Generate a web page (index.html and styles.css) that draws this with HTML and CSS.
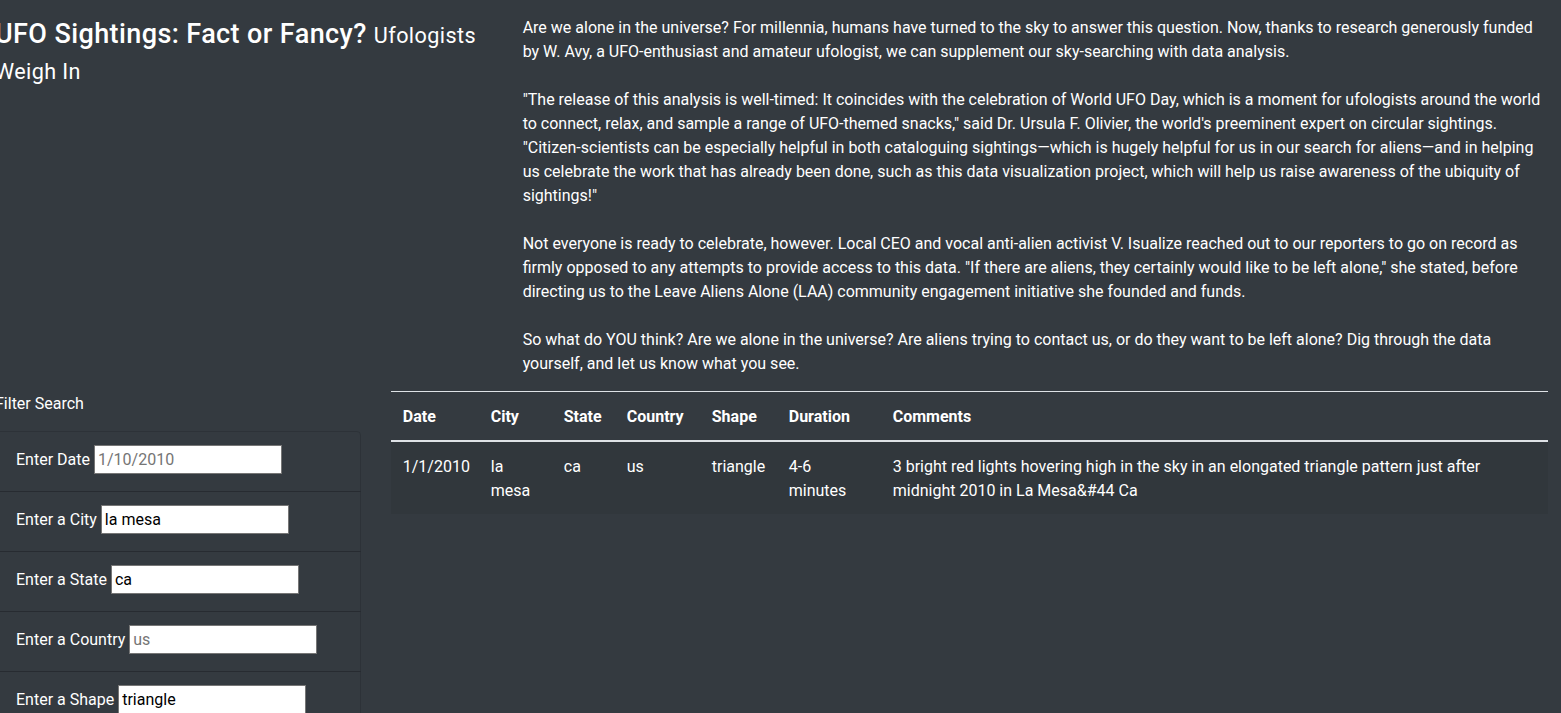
FILE: index.html
```html
<!DOCTYPE html>
<html lang="en">
<head>
<meta charset="utf-8">
<title>UFO Sightings</title>
<link rel="stylesheet" href="styles.css">
</head>
<body>
<div class="page">
  <div class="row">
    <div class="col col-4">
      <h1 class="title">UFO Sightings: Fact or Fancy? <small class="subtitle">Ufologists Weigh In</small></h1>
    </div>
    <div class="col col-8">
      <p class="intro">Are we alone in the universe? For millennia, humans have turned to the sky to answer this question. Now, thanks to research generously funded by W. Avy, a UFO-enthusiast and amateur ufologist, we can supplement our sky-searching with data analysis.<br><br>"The release of this analysis is well-timed: It coincides with the celebration of World UFO Day, which is a moment for ufologists around the world to connect, relax, and sample a range of UFO-themed snacks," said Dr. Ursula F. Olivier, the world's preeminent expert on circular sightings. "Citizen-scientists can be especially helpful in both cataloguing sightings—which is hugely helpful for us in our search for aliens—and in helping us celebrate the work that has already been done, such as this data visualization project, which will help us raise awareness of the ubiquity of sightings!"<br><br>Not everyone is ready to celebrate, however. Local CEO and vocal anti-alien activist V. Isualize reached out to our reporters to go on record as firmly opposed to any attempts to provide access to this data. "If there are aliens, they certainly would like to be left alone," she stated, before directing us to the Leave Aliens Alone (LAA) community engagement initiative she founded and funds.<br><br>So what do YOU think? Are we alone in the universe? Are aliens trying to contact us, or do they want to be left alone? Dig through the data yourself, and let us know what you see.</p>
    </div>
  </div>
  <div class="row">
    <div class="col col-3">
      <p class="filter-title">Filter Search</p>
      <ul class="filters">
        <li class="filter-item"><label class="filter-label" for="date">Enter Date</label><input class="filter-input" id="date" type="text" placeholder="1/10/2010"></li>
        <li class="filter-item"><label class="filter-label" for="city">Enter a City</label><input class="filter-input" id="city" type="text" value="la mesa"></li>
        <li class="filter-item"><label class="filter-label" for="state">Enter a State</label><input class="filter-input" id="state" type="text" value="ca"></li>
        <li class="filter-item"><label class="filter-label" for="country">Enter a Country</label><input class="filter-input" id="country" type="text" placeholder="us"></li>
        <li class="filter-item"><label class="filter-label" for="shape">Enter a Shape</label><input class="filter-input" id="shape" type="text" value="triangle"></li>
      </ul>
    </div>
    <div class="col col-9">
      <table class="ufo-table">
        <thead>
          <tr>
            <th class="c-date">Date</th>
            <th class="c-city">City</th>
            <th class="c-state">State</th>
            <th class="c-country">Country</th>
            <th class="c-shape">Shape</th>
            <th class="c-duration">Duration</th>
            <th class="c-comments">Comments</th>
          </tr>
        </thead>
        <tbody>
          <tr>
            <td>1/1/2010</td>
            <td>la mesa</td>
            <td>ca</td>
            <td>us</td>
            <td>triangle</td>
            <td>4-6 minutes</td>
            <td>3 bright red lights hovering high in the sky in an elongated triangle pattern just after midnight 2010 in La Mesa&amp;#44 Ca</td>
          </tr>
        </tbody>
      </table>
    </div>
  </div>
</div>
</body>
</html>
```
FILE: styles.css
```css
html, body {
  overflow-x: hidden;
}
body {
  margin: 0;
  background: #343a40;
  color: #fff;
  font-family: Roboto, "Open Sans", sans-serif;
  font-size: 16px;
  line-height: 24px;
}
.page {
  margin-left: -20px;
  width: 1583px;
  padding-top: 16px;
}
.row {
  display: flex;
}
.col {
  box-sizing: border-box;
  padding: 0 15px;
}
.col-4 { flex: 0 0 33.3333%; }
.col-8 { flex: 0 0 66.6667%; }
.col-3 { flex: 0 0 25%; }
.col-9 { flex: 0 0 75%; }

.title {
  margin: 0;
  font-size: 27px;
  line-height: 36px;
  font-weight: 500;
  letter-spacing: 0.4px;
}
.subtitle {
  font-size: 80%;
  font-weight: 400;
  line-height: 1;
}
.intro {
  margin: 0 0 15px;
}
.filter-title {
  margin: 0 0 15px;
  padding-top: 1px;
}
.filters {
  list-style: none;
  margin: 0;
  padding: 0;
}
.filter-item {
  box-sizing: border-box;
  height: 61px;
  margin-bottom: -1px;
  padding: 0 20px 4px;
  border: 1px solid rgba(0, 0, 0, 0.125);
  display: flex;
  align-items: center;
  gap: 4px;
}
.filter-item:first-child {
  border-top-left-radius: 4px;
  border-top-right-radius: 4px;
}
.filter-input {
  box-sizing: border-box;
  width: 188px;
  height: 29px;
  padding: 0 3px;
  border: 1px solid #767676;
  background: #fff;
  color: #000;
  font: inherit;
  line-height: 24px;
}
.filter-input::placeholder {
  color: #757575;
}
.ufo-table {
  width: 100%;
  table-layout: fixed;
  border-collapse: collapse;
  color: #fff;
}
.ufo-table th,
.ufo-table td {
  padding: 13px 12px 11px;
  text-align: left;
  vertical-align: top;
  border-top: 1px solid #dee2e6;
}
.ufo-table th {
  font-weight: 700;
  vertical-align: bottom;
  border-bottom: 2px solid #dee2e6;
}
.ufo-table tbody tr:nth-child(odd) {
  background: rgba(0, 0, 0, 0.05);
}
.c-date { width: 64px; }
.c-city { width: 49px; }
.c-state { width: 39px; }
.c-country { width: 61px; }
.c-shape { width: 53px; }
.c-duration { width: 80px; }
```
